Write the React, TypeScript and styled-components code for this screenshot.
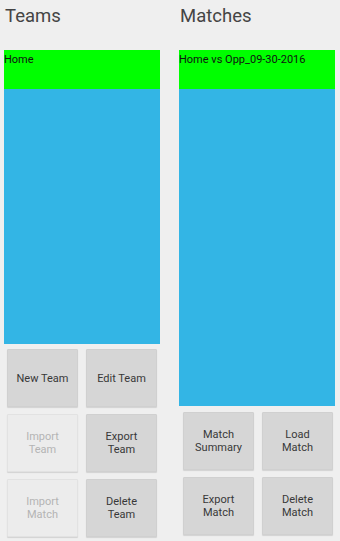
import React from "react";
import styled, { createGlobalStyle } from "styled-components";

const GlobalStyles = createGlobalStyle`
  * {
    box-sizing: border-box;
  }
  html, body {
    margin: 0px;
    padding: 0px;
    background: #efefef;
    font-family: Roboto, "Noto Sans", sans-serif;
  }
`;

const Screen = styled.div`
  width: 340px;
  height: 541px;
  display: grid;
  grid-template-columns: 156px 156px;
  column-gap: 19px;
  padding: 0 5px 0 4px;
  overflow: hidden;
`;

const Column = styled.div`
  display: flex;
  flex-direction: column;
`;

const Title = styled.h2`
  margin: 0;
  height: 50px;
  padding: 5px 0 0 1px;
  font-size: 18.5px;
  font-weight: 400;
  color: #444;
  line-height: 22px;
`;

const List = styled.div<{ $height: number }>`
  height: ${(p) => p.$height}px;
  background: #33b5e5;
  display: flex;
  flex-direction: column;
`;

const Item = styled.div`
  height: 39px;
  background: #00ff00;
  color: #111;
  font-size: 11px;
  line-height: 18px;
  padding-top: 1px;
  white-space: nowrap;
`;

const ButtonGrid = styled.div<{ $top: number; $left: number }>`
  display: grid;
  grid-template-columns: 71px 71px;
  grid-auto-rows: 58px;
  column-gap: 8px;
  row-gap: 7px;
  padding: ${(p) => p.$top}px 0 0 ${(p) => p.$left}px;
`;

const Button = styled.button<{ disabled?: boolean }>`
  border: 1px solid ${(p) => (p.disabled ? "#e2e2e2" : "#d0d0d0")};
  border-radius: 1px;
  background: ${(p) => (p.disabled ? "#ececec" : "#d6d6d6")};
  color: ${(p) => (p.disabled ? "#b4b4b4" : "#383838")};
  font-family: Roboto, "Noto Sans", sans-serif;
  font-size: 11px;
  line-height: 13px;
  padding: 0 4px;
  box-shadow: 0 1px 1px rgba(0, 0, 0, 0.12);
  display: flex;
  align-items: center;
  justify-content: center;
  text-align: center;
`;

const teamButtons = [
  { label: "New Team" },
  { label: "Edit Team" },
  { label: "Import\nTeam", disabled: true },
  { label: "Export\nTeam" },
  { label: "Import\nMatch", disabled: true },
  { label: "Delete\nTeam" },
];

const matchButtons = [
  { label: "Match\nSummary" },
  { label: "Load\nMatch" },
  { label: "Export\nMatch" },
  { label: "Delete\nMatch" },
];

const Label = ({ text }: { text: string }) => (
  <span>
    {text.split("\n").map((line, i) => (
      <React.Fragment key={i}>
        {i > 0 && <br />}
        {line}
      </React.Fragment>
    ))}
  </span>
);

export default function App() {
  return (
    <>
      <GlobalStyles />
      <Screen>
        <Column>
          <Title>Teams</Title>
          <List $height={294}>
            <Item>Home</Item>
          </List>
          <ButtonGrid $top={5} $left={3}>
            {teamButtons.map((b) => (
              <Button key={b.label} disabled={b.disabled}>
                <Label text={b.label} />
              </Button>
            ))}
          </ButtonGrid>
        </Column>
        <Column>
          <Title>Matches</Title>
          <List $height={356}>
            <Item>Home vs Opp_09-30-2016</Item>
          </List>
          <ButtonGrid $top={6} $left={4}>
            {matchButtons.map((b) => (
              <Button key={b.label}>
                <Label text={b.label} />
              </Button>
            ))}
          </ButtonGrid>
        </Column>
      </Screen>
    </>
  );
}
